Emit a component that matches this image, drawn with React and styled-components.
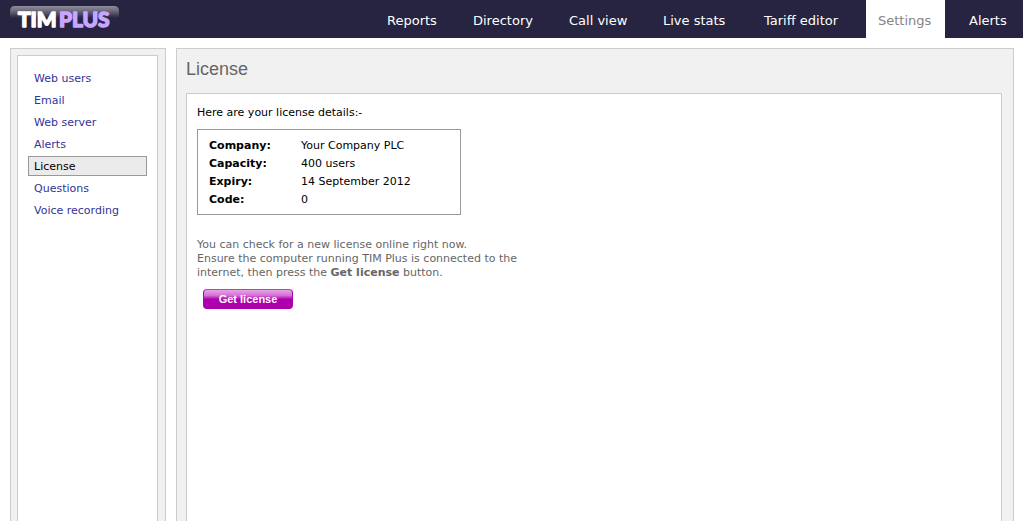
import React from "react";
import styled, { createGlobalStyle, css } from "styled-components";

const GlobalStyle = createGlobalStyle`
  *, *::before, *::after { box-sizing: border-box; }
  body {
    margin: 0;
    background: #fff;
    color: #000;
    font-family: Verdana, "DejaVu Sans", sans-serif;
    font-size: 11px;
    line-height: 14px;
  }
`;

const Page = styled.div`
  display: flex;
  flex-direction: column;
  min-height: 100vh;
  padding: 0 1px 10px 0;
`;

const Header = styled.header`
  display: flex;
  justify-content: space-between;
  height: 38px;
  padding: 0 4px 0 10px;
  background: #262440;
`;

const LogoLink = styled.a`
  display: block;
  padding-top: 4px;
`;

const LogoArt = styled.svg`
  display: block;
`;

const Nav = styled.nav`
  display: grid;
  grid-template-columns: 74px 84px 82px 89px 102px 79px 62px;
  column-gap: 12px;
`;

const NavLink = styled.a`
  display: flex;
  align-items: center;
  padding: 4px 0 0 12px;
  font-size: 13px;
  line-height: 16px;
  white-space: nowrap;
  text-decoration: none;
  color: ${(p) => (p.$active ? "#848484" : "#fff")};
  background: ${(p) => (p.$active ? "#fff" : "transparent")};
`;

const Body = styled.div`
  display: flex;
  flex: 1;
  gap: 10px;
  padding: 10px 9px 0 10px;
`;

const frame = css`
  display: flex;
  flex-direction: column;
  border: 1px solid #ccc;
  border-bottom: 0;
`;

const Sidebar = styled.aside`
  ${frame}
  flex: 0 0 156px;
  padding: 6px 7px 0 6px;
  background: #f1f1f1;
`;

const Main = styled.main`
  ${frame}
  flex: 1;
  padding: 0 11px 0 9px;
  background: #f1f1f1;
`;

const Menu = styled.nav`
  ${frame}
  flex: 1;
  gap: 2px;
  padding: 12px 10px;
  background: #fff;
`;

const MenuLink = styled.a`
  padding: 3px 5px 1px;
  border: 1px solid ${(p) => (p.$active ? "#999" : "transparent")};
  background: ${(p) => (p.$active ? "#ebebeb" : "transparent")};
  color: ${(p) => (p.$active ? "#000" : "#339")};
  text-decoration: none;
`;

const Title = styled.h1`
  margin: 0;
  padding: 8px 0 12px;
  font: 18px/24px Arial, "Liberation Sans", sans-serif;
  color: #666;
`;

const Content = styled.section`
  ${frame}
  flex: 1;
  align-items: flex-start;
  padding: 12px 10px;
  background: #fff;
`;

const Intro = styled.p`
  margin: 0 0 9px;
`;

const Details = styled.div`
  width: 264px;
  padding: 6px 11px;
  border: 1px solid #999;
`;

const DetailsTable = styled.table`
  border-collapse: collapse;

  th, td {
    padding: 3px 0 1px;
    text-align: left;
    line-height: 14px;
  }
  th { width: 92px; }
`;

const Hint = styled.p`
  margin: 23px 0 9px;
  color: #666;
`;

const Button = styled.button`
  width: 90px;
  height: 20px;
  margin: 0 6px;
  padding: 0;
  border: 1px solid #ab00ab;
  border-top-color: #c23cc2;
  border-radius: 4px;
  background: linear-gradient(#e6a3e6 0, #d673d6 30%, #bd1fbd 45%, #ad00ad 52%, #ad00ad 100%);
  color: #fff;
  font: bold 11px/18px Arial, "Liberation Sans", sans-serif;
  cursor: pointer;
`;

function Logo() {
  return (
    <LogoArt width="110" height="30" viewBox="0 -2 110 30" role="img" aria-label="TIM Plus">
      <defs>
        <linearGradient id="logoShine" x1="0" y1="0" x2="0" y2="1">
          <stop offset="0" stopColor="#8f8d9b" />
          <stop offset="0.4" stopColor="#6c6a7c" />
          <stop offset="1" stopColor="#262440" />
        </linearGradient>
      </defs>
      <path d="M0 12V5Q0 0 5 0H104Q109 0 109 5V12Z" fill="url(#logoShine)" />
      <g fontFamily="Lato, sans-serif" fontWeight="700" fontSize="21" strokeWidth="1.6" strokeLinejoin="round">
        <text x="8" y="21" fill="#fff" stroke="#fff">TIM</text>
        <text x="49" y="21" fill="#c8a5ff" stroke="#c8a5ff">PLUS</text>
      </g>
    </LogoArt>
  );
}

const navItems = ["Reports", "Directory", "Call view", "Live stats", "Tariff editor", "Settings", "Alerts"];
const menuItems = ["Web users", "Email", "Web server", "Alerts", "License", "Questions", "Voice recording"];
const details = [
  ["Company:", "Your Company PLC"],
  ["Capacity:", "400 users"],
  ["Expiry:", "14 September 2012"],
  ["Code:", "0"],
];

export default function App() {
  return (
    <Page>
      <GlobalStyle />
      <Header>
        <LogoLink href="#home"><Logo /></LogoLink>
        <Nav>
          {navItems.map((item) => (
            <NavLink key={item} href="#nav" $active={item === "Settings"}>{item}</NavLink>
          ))}
        </Nav>
      </Header>
      <Body>
        <Sidebar>
          <Menu>
            {menuItems.map((item) => (
              <MenuLink key={item} href="#menu" $active={item === "License"}>{item}</MenuLink>
            ))}
          </Menu>
        </Sidebar>
        <Main>
          <Title>License</Title>
          <Content>
            <Intro>Here are your license details:-</Intro>
            <Details>
              <DetailsTable>
                <tbody>
                  {details.map(([label, value]) => (
                    <tr key={label}>
                      <th scope="row">{label}</th>
                      <td>{value}</td>
                    </tr>
                  ))}
                </tbody>
              </DetailsTable>
            </Details>
            <Hint>
              You can check for a new license online right now.<br />
              Ensure the computer running TIM Plus is connected to the<br />
              internet, then press the <b>Get license</b> button.
            </Hint>
            <Button type="button">Get license</Button>
          </Content>
        </Main>
      </Body>
    </Page>
  );
}
